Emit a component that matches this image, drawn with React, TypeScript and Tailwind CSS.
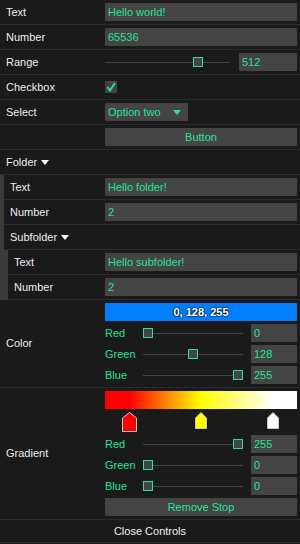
import type { ReactNode } from 'react';

const GREEN = 'text-[#27e39b]';

function Row({ label, children, tall }: { label: ReactNode; children?: ReactNode; tall?: boolean }) {
  return (
    <div className={`flex items-center border-b border-[#2c2c2c] ${tall ? '' : 'h-[25px]'}`}>
      <div className="flex-1 pl-[6px] text-[#eee]">{label}</div>
      <div className="w-[192px] mr-[3px]">{children}</div>
    </div>
  );
}

function Box({ children, className = '' }: { children?: ReactNode; className?: string }) {
  return (
    <div className={`h-[18px] bg-[#444] flex items-center px-[3px] ${GREEN} ${className}`}>{children}</div>
  );
}

// thin track with square handle
function Slider({ width, left }: { width: number; left: number }) {
  return (
    <div className="relative h-[18px] shrink-0" style={{ width }}>
      <div className="absolute left-0 right-0 top-[9px] h-px bg-[#444]" />
      <div
        className="absolute top-[4px] w-[10px] h-[10px] bg-[#444] border border-[#27e39b]"
        style={{ left }}
      />
    </div>
  );
}

function SubRow({ label, left, value }: { label: string; left: number; value: string }) {
  return (
    <div className="flex items-center h-[18px]">
      <div className={`w-[38px] ${GREEN}`}>{label}</div>
      <Slider width={100} left={left} />
      <Box className="ml-[8px] w-[46px]">{value}</Box>
    </div>
  );
}

function Arrow({ color = 'border-t-white' }: { color?: string }) {
  return (
    <span
      className={`inline-block w-0 h-0 border-l-[4px] border-r-[4px] border-t-[5px] border-l-transparent border-r-transparent ${color}`}
    />
  );
}

function Stop({ left, w, h, fill }: { left: number; w: number; h: number; fill: string }) {
  const m = w / 2;
  return (
    <svg className="absolute top-0" style={{ left }} width={w} height={h} viewBox={`0 0 ${w} ${h}`}>
      <polygon
        points={`0.5,6 ${m},0.5 ${w - 0.5},6 ${w - 0.5},${h - 0.5} 0.5,${h - 0.5}`}
        fill={fill}
        stroke="#c8c8c8"
        strokeWidth="1"
      />
    </svg>
  );
}

export default function App() {
  return (
    <div className="w-[300px] h-[544px] bg-[#1a1a1a] font-['Liberation_Sans',Arial,sans-serif] text-[11px] leading-none">
      <Row label="Text">
        <Box>Hello world!</Box>
      </Row>
      <Row label="Number">
        <Box>65536</Box>
      </Row>
      <Row label="Range">
        <div className="flex items-center">
          <Slider width={125} left={88} />
          <Box className="ml-[9px] w-[58px]">512</Box>
        </div>
      </Row>
      <Row label="Checkbox">
        <div className="w-[12px] h-[12px] bg-[#444]">
          <svg width="12" height="12" viewBox="0 0 12 12">
            <polyline points="2.5,6 5,9.5 10,2" fill="none" stroke="#27e39b" strokeWidth="2" />
          </svg>
        </div>
      </Row>
      <Row label="Select">
        <Box className="w-[83px] justify-between pr-[7px]">
          <span>Option two</span>
          <Arrow color="border-t-[#27e39b]" />
        </Box>
      </Row>
      <Row label="">
        <Box className="justify-center">Button</Box>
      </Row>

      <Row
        label={
          <span className="flex items-center gap-[4px]">
            Folder <Arrow />
          </span>
        }
      />
      <div className="border-l-4 border-[#3a3a3a]">
        <Row label="Text">
          <Box>Hello folder!</Box>
        </Row>
        <Row label="Number">
          <Box>2</Box>
        </Row>
        <Row
          label={
            <span className="flex items-center gap-[4px]">
              Subfolder <Arrow />
            </span>
          }
        />
        <div className="border-l-4 border-[#3a3a3a]">
          <Row label="Text">
            <Box>Hello subfolder!</Box>
          </Row>
          <Row label="Number">
            <Box>2</Box>
          </Row>
        </div>
      </div>

      <Row label="Color" tall>
        <div className="flex flex-col gap-[3px] py-[3px]">
          <div className="h-[18px] bg-[#0080ff] flex items-center justify-center font-bold text-white [text-shadow:0_0_2px_#000,0_0_2px_#000]">
            0, 128, 255
          </div>
          <SubRow label="Red" left={0} value="0" />
          <SubRow label="Green" left={45} value="128" />
          <SubRow label="Blue" left={90} value="255" />
        </div>
      </Row>

      <Row label="Gradient" tall>
        <div className="flex flex-col gap-[3px] py-[3px]">
          <div className="h-[18px] bg-[linear-gradient(to_right,#ff0000_12.5%,#ffff00_50%,#ffffff_87.5%)]" />
          <div className="relative h-[20px]">
            <Stop left={17} w={15} h={20} fill="#ff0000" />
            <Stop left={90} w={12} h={17} fill="#ffff00" />
            <Stop left={162} w={12} h={17} fill="#ffffff" />
          </div>
          <SubRow label="Red" left={90} value="255" />
          <SubRow label="Green" left={0} value="0" />
          <SubRow label="Blue" left={0} value="0" />
          <Box className="justify-center">Remove Stop</Box>
        </div>
      </Row>

      <div className="h-[23px] flex items-center justify-center text-[#eee] border-b border-[#2c2c2c]">
        Close Controls
      </div>
    </div>
  );
}
